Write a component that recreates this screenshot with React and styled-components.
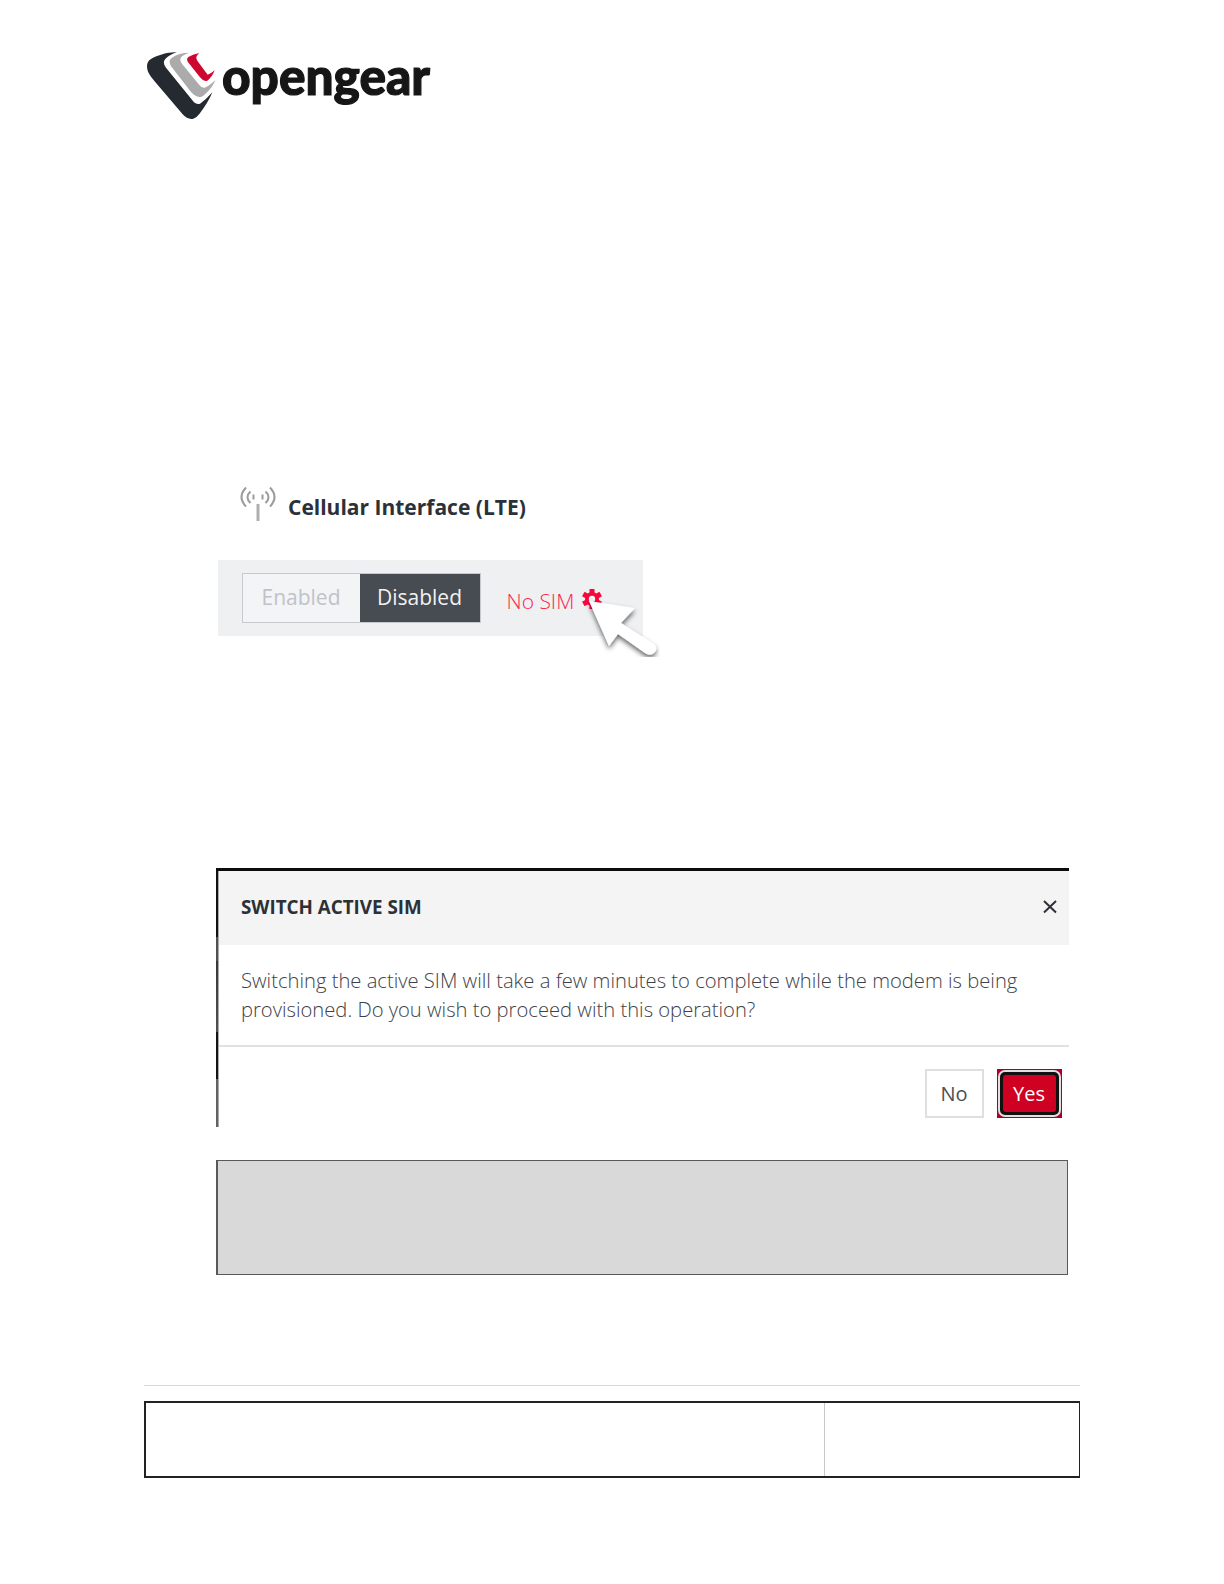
import React from 'react';
import styled, { createGlobalStyle } from 'styled-components';

const GlobalStyle = createGlobalStyle`
  * {
    box-sizing: border-box;
  }

  body {
    margin: 0;
    background: #fff;
    font-family: 'Open Sans', 'Noto Sans', sans-serif;
  }

  svg {
    display: block;
    flex: none;
  }
`;

const Page = styled.main`
  display: flex;
  flex-direction: column;
  width: 1224px;
  height: 1584px;
  padding: 51px 144px 0;
  background: #fff;
  overflow: hidden;
`;

const Brand = styled.header`
  display: flex;
  height: 429px;
  padding-left: 2px;
`;

const Wordmark = styled.svg`
  margin-left: 5px;
  overflow: visible;
  font-family: Lato, sans-serif;
  font-size: 52px;
  font-weight: 900;
  fill: #161616;
  stroke: #161616;
  stroke-width: 1.2px;
`;

const Content = styled.div`
  display: flex;
  flex-direction: column;
  height: 905px;
  padding-left: 72px;
`;

const Cellular = styled.section`
  display: flex;
  flex-direction: column;
  width: 427px;
  height: 388px;
  padding-left: 1.5px;
`;

const InterfaceTitle = styled.div`
  display: flex;
  height: 80px;
  padding: 6px 0 0 22.5px;
`;

const Heading = styled.h2`
  margin: 6px 0 0 12px;
  color: #2b3138;
  font-size: 21px;
  font-weight: 700;
  line-height: 30px;
  white-space: nowrap;
`;

const ControlBar = styled.div`
  position: relative;
  display: flex;
  height: 76px;
  padding: 13px 0 0 24px;
  background: #eff0f2;
`;

const Toggle = styled.div`
  display: flex;
  width: 239px;
  height: 50px;
  border: 1px solid #c4cace;
`;

const ToggleOption = styled.div`
  width: ${props => (props.$active ? 120 : 117)}px;
  background: ${props => (props.$active ? '#474c52' : '#f3f4f6')};
  color: ${props => (props.$active ? '#f1f1f1' : '#bfc2cb')};
  font-size: 21px;
  line-height: 47px;
  text-align: center;
`;

const SimStatus = styled.div`
  display: flex;
  margin: 13px 0 0 26px;
  color: #fb2850;
  font-size: 21px;
  font-weight: 300;
  line-height: 30px;
  white-space: nowrap;
`;

const Pointer = styled.svg`
  position: absolute;
  top: 35px;
  left: 357px;
`;

const Dialog = styled.section`
  position: relative;
  display: flex;
  flex-direction: column;
  width: 853px;
  height: 259px;
  padding-left: 3px;
  border-top: 3px solid #0c0c0e;
  background: linear-gradient(
    to right,
    transparent 0,
    transparent 2px,
    #aaa 2px,
    #aaa 3px,
    #fff 3px
  ),
  linear-gradient(
    #111 66px,
    #515155 66px,
    #515155 90px,
    #38383b 90px,
    #515155 161px,
    #111518 161px,
    #111518 208px,
    #626262 208px
  );
`;

const DialogHeader = styled.div`
  display: flex;
  justify-content: space-between;
  height: 74px;
  padding: 21px 11px 0 22px;
  background: #f4f4f5;
`;

const DialogTitle = styled.h3`
  margin: 0;
  color: #2c3136;
  font-size: 18.8px;
  font-weight: 700;
  line-height: 30px;
`;

const DialogBody = styled.p`
  height: 102px;
  margin: 0;
  padding: 21px 0 0 22px;
  border-bottom: 2px solid #dfe1e5;
  color: #3e4248;
  font-size: 20.2px;
  font-weight: 300;
  line-height: 29px;
  white-space: nowrap;
`;

const DialogFooter = styled.div`
  display: flex;
  justify-content: flex-end;
  gap: 13px;
  padding: 22px 7.5px 0 0;
`;

const Button = styled.button`
  width: 59px;
  height: 49px;
  padding: 0;
  border: 2px solid #dddfe3;
  background: #fff;
  color: #4b5056;
  font-family: inherit;
  font-size: 20px;
`;

const FocusedButton = styled(Button)`
  width: 65px;
  padding: 0;
  border: 1px solid #a8002a;
  background: #a8002a;
  color: #fff;
`;

const FocusRing = styled.span`
  display: block;
  height: 47px;
  border: 2px solid #e8dcde;
  border-radius: 7px;
  background: #111;
  padding: 3px;
  line-height: 37px;

  > span {
    display: block;
    height: 37px;
    border-radius: 3px;
    background: #d00023;
  }
`;

const Note = styled.aside`
  width: 852px;
  height: 115px;
  margin-top: 33px;
  border: 1px solid #595959;
  border-left-width: 2px;
  background: #d9d9d9;
`;

const Footer = styled.footer`
  width: 936px;
  padding-top: 15px;
  border-top: 1px solid #d9d9d9;
`;

const FooterTable = styled.div`
  display: grid;
  grid-template-columns: 679px 1fr;
  height: 77px;
  border: 2px solid #222;
  border-right-width: 1px;
`;

const FooterCell = styled.div`
  border-right: ${props => (props.$divided ? '1px solid #c8c8c8' : 'none')};
`;

const Gear = styled.svg`
  margin: 3px 0 0 8px;
`;

const LogoMark = () => (
  <svg width="70" height="69" viewBox="30 33 210 207">
    <path
      fill="#242a30"
      d="M122 37C101 35 66 44 45 57Q28 67 35 92Q39 104 57 125L140 223Q155 240 172 236Q181 234 190 222Q217 187 229 157Q210 179 192 191Q183 195 174 187L90 83Q77 66 90 55Q101 44 122 37Z"
    />
    <path
      fill="#ababab"
      d="M160 38Q129 38 108 53Q96 61 104 77L161 151Q177 173 194 171Q202 169 211 159Q231 140 238 120Q221 137 206 143Q198 145 190 135L139 73Q127 58 138 49Q147 41 160 38Z"
    />
    <path
      fill="#ce0730"
      d="M190 39Q169 43 157 51Q149 57 158 69L192 112Q203 126 214 122Q228 112 236 91Q225 101 215 104L185 64Q175 50 190 39Z"
    />
  </svg>
);

const AntennaIcon = () => (
  <svg
    width="36"
    height="37"
    viewBox="0 0 36 37"
    fill="none"
    stroke="#999b9d"
    strokeWidth="2"
  >
    <path d="M6 1.5Q-3 11 6 20.5M10.500 5.500Q4.500 11 10.500 17M30 1.500Q39 11 30 20.500M25.500 5.500Q31.500 11 25.500 17" />
    <path d="M13.500 8.500V13.500M22.500 8.500V13.500" />
    <path d="M18 18V35" strokeWidth="3" stroke="#adafb0" />
  </svg>
);

const GearIcon = () => (
  <Gear width="20" height="20" viewBox="0 0 20 20">
    <g fill="#f9063c">
      {[0, 60, 120].map(angle => (
        <rect
          key={angle}
          x="7.500"
          y="0"
          width="5"
          height="20"
          transform={`rotate(${angle} 10 10)`}
        />
      ))}
      <circle cx="10" cy="10" r="7" />
    </g>
    <circle cx="10" cy="10" r="3.200" fill="#eff0f2" />
  </Gear>
);

const Cursor = () => (
  <Pointer width="85" height="62" viewBox="0 0 85 62">
    <defs>
      <filter id="cursorShadow" x="-20%" y="-20%" width="150%" height="150%">
        <feDropShadow dx="0" dy="3" stdDeviation="2.500" floodOpacity="0.600" />
      </filter>
    </defs>
    <path
      filter="url(#cursorShadow)"
      fill="#fff"
      d="M14 6L60 13L46 28L79 49Q83 53 80 57Q76 62 70 58L43 39L34 51Z"
    />
  </Pointer>
);

export default function App() {
  return (
    <>
      <GlobalStyle />
      <Page>
        <Brand>
          <LogoMark />
          <Wordmark width="212" height="80" viewBox="0 0 212 80">
            <text x="1" y="44" textLength="208" lengthAdjust="spacingAndGlyphs">
              opengear
            </text>
          </Wordmark>
        </Brand>
        <Content>
          <Cellular>
            <InterfaceTitle>
              <AntennaIcon />
              <Heading>Cellular Interface (LTE)</Heading>
            </InterfaceTitle>
            <ControlBar>
              <Toggle>
                <ToggleOption>Enabled</ToggleOption>
                <ToggleOption $active>Disabled</ToggleOption>
              </Toggle>
              <SimStatus>
                No SIM
                <GearIcon />
              </SimStatus>
              <Cursor />
            </ControlBar>
          </Cellular>
          <Dialog>
            <DialogHeader>
              <DialogTitle>SWITCH ACTIVE SIM</DialogTitle>
              <svg width="16" height="30" viewBox="0 0 16 30">
                <path
                  d="M2 9L14 20.500M14 9L2 20.500"
                  stroke="#30303a"
                  strokeWidth="2"
                />
              </svg>
            </DialogHeader>
            <DialogBody>
              Switching the active SIM will take a few minutes to complete while
              the modem is being
              <br />
              provisioned. Do you wish to proceed with this operation?
            </DialogBody>
            <DialogFooter>
              <Button>No</Button>
              <FocusedButton>
                <FocusRing>
                  <span>Yes</span>
                </FocusRing>
              </FocusedButton>
            </DialogFooter>
          </Dialog>
          <Note />
        </Content>
        <Footer>
          <FooterTable>
            <FooterCell $divided />
            <FooterCell />
          </FooterTable>
        </Footer>
      </Page>
    </>
  );
}
